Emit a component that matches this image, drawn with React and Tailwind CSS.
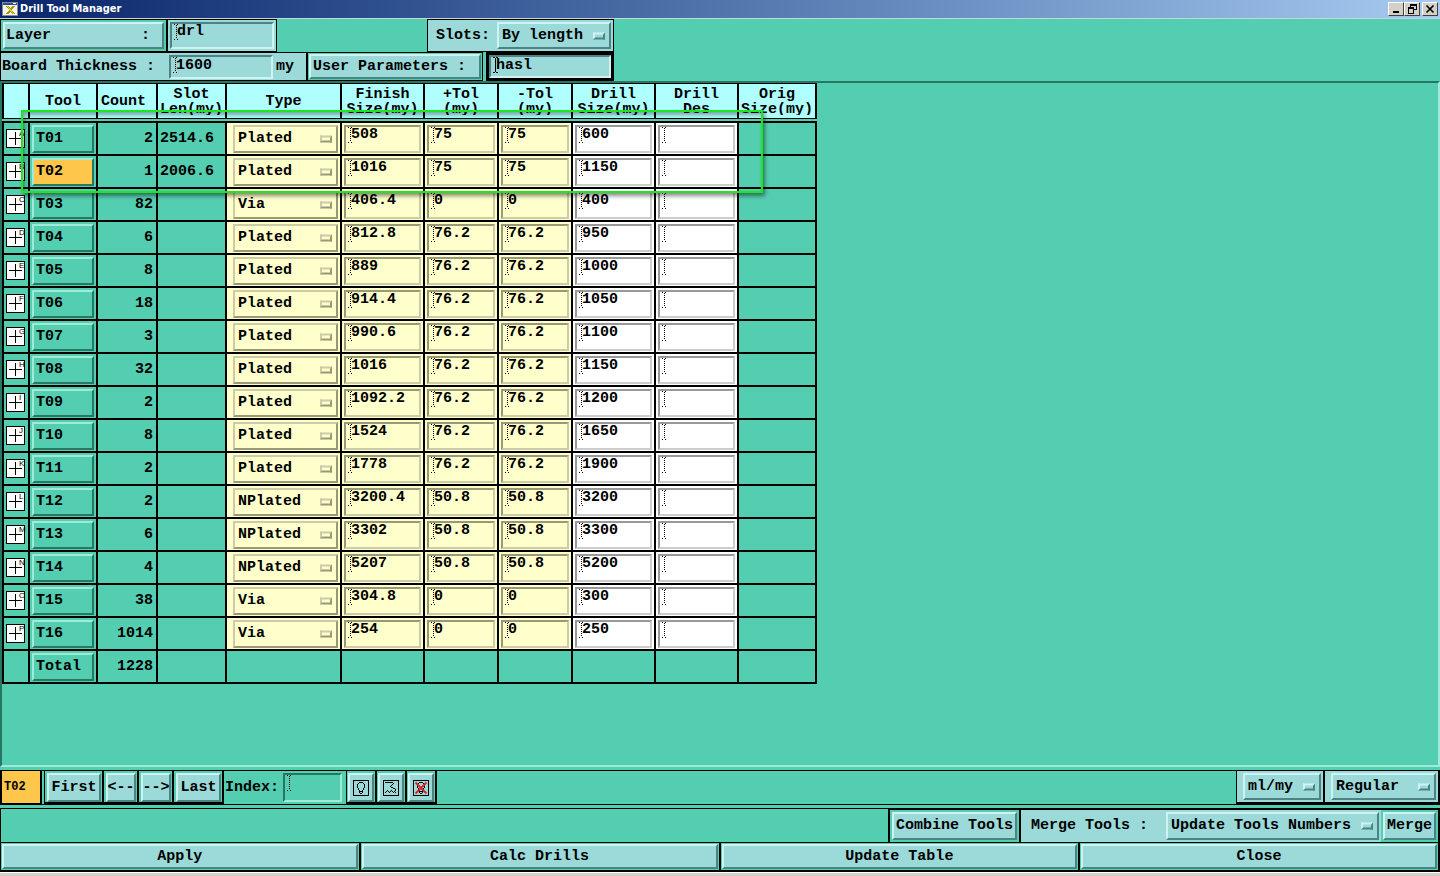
import { useState } from 'react';
import clsx from 'clsx';

const TOOLS = [
    { id: 'T01', mark: 'A', count: 2, slot: '2514.6', type: 'Plated', finish: '508', plus: '75', minus: '75', drill: '600' },
    { id: 'T02', mark: 'B', count: 1, slot: '2006.6', type: 'Plated', finish: '1016', plus: '75', minus: '75', drill: '1150' },
    { id: 'T03', mark: 'C', count: 82, slot: '', type: 'Via', finish: '406.4', plus: '0', minus: '0', drill: '400' },
    { id: 'T04', mark: 'D', count: 6, slot: '', type: 'Plated', finish: '812.8', plus: '76.2', minus: '76.2', drill: '950' },
    { id: 'T05', mark: 'E', count: 8, slot: '', type: 'Plated', finish: '889', plus: '76.2', minus: '76.2', drill: '1000' },
    { id: 'T06', mark: 'F', count: 18, slot: '', type: 'Plated', finish: '914.4', plus: '76.2', minus: '76.2', drill: '1050' },
    { id: 'T07', mark: 'G', count: 3, slot: '', type: 'Plated', finish: '990.6', plus: '76.2', minus: '76.2', drill: '1100' },
    { id: 'T08', mark: 'H', count: 32, slot: '', type: 'Plated', finish: '1016', plus: '76.2', minus: '76.2', drill: '1150' },
    { id: 'T09', mark: 'I', count: 2, slot: '', type: 'Plated', finish: '1092.2', plus: '76.2', minus: '76.2', drill: '1200' },
    { id: 'T10', mark: 'J', count: 8, slot: '', type: 'Plated', finish: '1524', plus: '76.2', minus: '76.2', drill: '1650' },
    { id: 'T11', mark: 'K', count: 2, slot: '', type: 'Plated', finish: '1778', plus: '76.2', minus: '76.2', drill: '1900' },
    { id: 'T12', mark: 'L', count: 2, slot: '', type: 'NPlated', finish: '3200.4', plus: '50.8', minus: '50.8', drill: '3200' },
    { id: 'T13', mark: 'M', count: 6, slot: '', type: 'NPlated', finish: '3302', plus: '50.8', minus: '50.8', drill: '3300' },
    { id: 'T14', mark: 'N', count: 4, slot: '', type: 'NPlated', finish: '5207', plus: '50.8', minus: '50.8', drill: '5200' },
    { id: 'T15', mark: 'O', count: 38, slot: '', type: 'Via', finish: '304.8', plus: '0', minus: '0', drill: '300' },
    { id: 'T16', mark: 'P', count: 1014, slot: '', type: 'Via', finish: '254', plus: '0', minus: '0', drill: '250' },
];

const HEADERS = [
    [''],
    ['Tool'],
    ['Count'],
    ['Slot', 'Len(my)'],
    ['Type'],
    ['Finish', 'Size(my)'],
    ['+Tol', '(my)'],
    ['-Tol', '(my)'],
    ['Drill', 'Size(my)'],
    ['Drill', 'Des'],
    ['Orig', 'Size(my)'],
];

const RAISED = {
    aqua: 'bg-[#9cdada] border-t-[#cdf3f3] border-l-[#cdf3f3] border-b-[#4d8383] border-r-[#4d8383]',
    teal: 'bg-[#54ceb0] border-t-[#a0ead8] border-l-[#a0ead8] border-b-[#277863] border-r-[#277863]',
    orange: 'bg-[#ffc64c] border-t-[#a0ead8] border-l-[#a0ead8] border-b-[#277863] border-r-[#277863]',
    cream: 'bg-[#ffffcc] border-t-[#ccccaa] border-l-[#ccccaa] border-b-[#999978] border-r-[#999978]',
};

const SUNKEN = {
    aqua: 'bg-[#9cdada] border-t-[#4d8383] border-l-[#4d8383] border-b-[#cdf3f3] border-r-[#cdf3f3]',
    teal: 'bg-[#54ceb0] border-t-[#277863] border-l-[#277863] border-b-[#a0ead8] border-r-[#a0ead8]',
    cream: 'bg-[#ffffcc] border-t-[#999978] border-l-[#999978] border-b-[#ccccaa] border-r-[#ccccaa]',
    white: 'bg-white border-t-[#999999] border-l-[#999999] border-b-[#cccccc] border-r-[#cccccc]',
};

function Caret({ solid }) {
    return (
        <svg
            className="pointer-events-none absolute left-1 top-[2px]"
            width="5"
            height="16"
            shapeRendering="crispEdges"
            stroke="#000"
            fill="none"
            aria-hidden="true"
        >
            <path
                d="M0 .5h2M3 .5h2M2.5 1v14M0 15.5h2M3 15.5h2"
                strokeDasharray={solid ? undefined : '1 1'}
            />
        </svg>
    );
}

function Field({ label, value = '', tone, solid, short, className }) {
    return (
        <div className={clsx('relative', className)}>
            <input
                aria-label={label}
                defaultValue={value}
                className={clsx(
                    'block h-full w-full border-2 pl-[5px] outline-none',
                    short ? 'pb-[3px]' : 'pb-2',
                    SUNKEN[tone]
                )}
            />
            <Caret solid={solid} />
        </div>
    );
}

function Menu({ label, id, value, options, tone = 'aqua', className }) {
    return (
        <div className={clsx('relative', className)}>
            <select
                id={id}
                aria-label={label}
                defaultValue={value}
                className={clsx('block h-full w-full appearance-none border-2 pl-[3px] outline-none', RAISED[tone])}
            >
                {options.map((option) => (
                    <option key={option}>{option}</option>
                ))}
            </select>
            <span
                className={clsx(
                    'pointer-events-none absolute right-[6px] top-1/2 h-[7px] w-3 -translate-y-1/2 border-2',
                    RAISED[tone]
                )}
            ></span>
        </div>
    );
}

function Button({ tone = 'aqua', className, children, ...props }) {
    return (
        <button
            type="button"
            className={clsx('flex items-center border-2 whitespace-pre', RAISED[tone], className)}
            {...props}
        >
            {children}
        </button>
    );
}

function ToolMark({ letter }) {
    return (
        <svg width="20" height="22" shapeRendering="crispEdges" className="mx-auto block" aria-hidden="true">
            <rect x=".5" y="1.5" width="18" height="18" fill="#fff" stroke="#000" />
            <path d="M3 10.5h13M9.5 4v13" stroke="#000" />
            <text x="13" y="8" fontSize="8" fontWeight="normal" fontFamily="Liberation Sans">
                {letter}
            </text>
        </svg>
    );
}

function TitleBar() {
    const box =
        'flex h-[14px] w-4 items-center justify-center border bg-[#d4d0c8] border-t-white border-l-white border-b-[#404040] border-r-[#404040]';
    return (
        <header className="flex h-[19px] items-center border-b border-[#c5d8d8] bg-linear-to-r from-[#0a246a] to-[#a6caf0] pl-[2px] pr-[2px]">
            <svg width="16" height="14" className="mr-[2px]" shapeRendering="crispEdges" aria-hidden="true">
                <rect x=".5" y=".5" width="15" height="13" fill="#f4f4ec" stroke="#8c8c8c" />
                <path d="M1 1.5h14" stroke="#2c4ca0" strokeWidth="2" />
                <path d="M11 1.5h3" stroke="#fff" />
                <path d="M5 4l7 8M12 4l-7 8" stroke="#a89a10" strokeWidth="2" />
                <path d="M5 4l7 8" stroke="#e0d030" />
            </svg>
            <h1 className="flex-1 font-['DejaVu_Sans_Condensed','DejaVu_Sans',sans-serif] text-[11px] font-bold text-white">
                Drill Tool Manager
            </h1>
            <button type="button" aria-label="Minimize" className={box}>
                <svg width="12" height="10" shapeRendering="crispEdges">
                    <path d="M3 8h6" stroke="#000" strokeWidth="2" />
                </svg>
            </button>
            <button type="button" aria-label="Restore" className={box}>
                <svg width="12" height="10" shapeRendering="crispEdges" fill="none" stroke="#000">
                    <path d="M4.500 3V.5h6v5H8M4 1.500h7" />
                    <path d="M2.500 4v5.500h5V4M2 4.500h6M2 3.500h6" />
                </svg>
            </button>
            <button type="button" aria-label="Close" className={clsx(box, 'ml-[2px]')}>
                <svg width="12" height="10" fill="none" stroke="#000" strokeWidth="1.700">
                    <path d="M2.500 1.500l7 7M9.500 1.500l-7 7" />
                </svg>
            </button>
        </header>
    );
}

function Settings() {
    return (
        <section className="w-[614px]">
            <div className="flex h-[33px]">
                <div className="flex w-[168px] border border-r-2 border-black p-[2px]">
                    <Button className="flex-1 justify-between pl-px pr-3">
                        <span>Layer</span>
                        <span>:</span>
                    </Button>
                </div>
                <div className="w-[109px] border border-l-0 border-black bg-[#9cdada] p-[2px]">
                    <Field label="Layer" value="drl" tone="aqua" className="h-full" />
                </div>
                <div className="ml-auto flex items-center border border-black bg-[#9cdada] py-[2px] pl-2 pr-[2px]">
                    <label htmlFor="slots" className="mr-[7px]">
                        Slots:
                    </label>
                    <Menu
                        id="slots"
                        value="By length"
                        options={['By length', 'By count']}
                        className="h-full w-[114px]"
                    />
                </div>
            </div>
            <div className="flex h-[29px]">
                <div className="flex w-[308px] items-center border border-r-2 border-black bg-[#9cdada] pl-px">
                    <span className="w-[167px]">Board Thickness :</span>
                    <Field label="Board Thickness" value="1600" tone="aqua" short className="mr-[3px] h-6 w-[104px]" />
                    <span>my</span>
                </div>
                <div className="flex w-[175px] border border-l-0 border-black p-px">
                    <Button className="flex-1 pl-[2px]">User Parameters :</Button>
                </div>
                <div className="ml-auto w-[128px] border-3 border-black">
                    <Field label="User Parameters" value="hasl" tone="aqua" solid short className="h-full" />
                </div>
            </div>
        </section>
    );
}

function ToolTable({ selected, onSelect }) {
    const line = 'border-b-2 border-r-2 border-black p-0';
    const total = TOOLS.reduce((sum, tool) => sum + tool.count, 0);
    return (
        <table className="w-[815px] table-fixed border-separate border-spacing-0">
            <colgroup>
                <col className="w-[28px]" />
                <col className="w-[68px]" />
                <col className="w-[60px]" />
                <col className="w-[69px]" />
                <col className="w-[115px]" />
                <col className="w-[83px]" />
                <col className="w-[74px]" />
                <col className="w-[74px]" />
                <col className="w-[83px]" />
                <col className="w-[83px]" />
                <col className="w-[78px]" />
            </colgroup>
            <thead>
                <tr className="h-9">
                    {HEADERS.map((lines, i) => (
                        <th
                            key={i}
                            className="border-y border-r-2 border-black bg-[#b0ffff] p-0 leading-[15px] first:border-l-2"
                        >
                            <div
                                className={clsx(
                                    'max-h-[28px] overflow-hidden whitespace-nowrap',
                                    lines[0] === 'Count' && 'pl-[3px] text-left'
                                )}
                            >
                                {lines.map((text) => (
                                    <div key={text}>{text}</div>
                                ))}
                            </div>
                        </th>
                    ))}
                </tr>
            </thead>
            <tbody>
                <tr>
                    <td colSpan={11} className="h-1 border-b-2 border-black p-0"></td>
                </tr>
                {TOOLS.map((tool) => (
                    <tr key={tool.id} className="h-[33px]">
                        <td className={clsx(line, 'border-l-2')}>
                            <ToolMark letter={tool.mark} />
                        </td>
                        <td className={line}>
                            <Button
                                tone={tool.id === selected ? 'orange' : 'teal'}
                                className="mx-[2px] h-7 w-[62px] pl-[2px]"
                                onClick={() => onSelect(tool.id)}
                            >
                                {tool.id}
                            </Button>
                        </td>
                        <td className={clsx(line, 'text-right')}>
                            <span className="pr-[3px]">{tool.count}</span>
                        </td>
                        <td className={line}>
                            <span className="pl-[2px]">{tool.slot}</span>
                        </td>
                        <td className={clsx(line, 'bg-[#ffffcc]')}>
                            <Menu
                                label={`${tool.id} type`}
                                value={tool.type}
                                options={['Plated', 'NPlated', 'Via']}
                                tone="cream"
                                className="ml-[6px] mr-[2px] h-7"
                            />
                        </td>
                        <td className={clsx(line, 'bg-[#ffffcc]')}>
                            <Field label={`${tool.id} finish size`} value={tool.finish} tone="cream" className="mx-[2px] h-7" />
                        </td>
                        <td className={clsx(line, 'bg-[#ffffcc]')}>
                            <Field label={`${tool.id} plus tolerance`} value={tool.plus} tone="cream" className="mx-[2px] h-7" />
                        </td>
                        <td className={clsx(line, 'bg-[#ffffcc]')}>
                            <Field label={`${tool.id} minus tolerance`} value={tool.minus} tone="cream" className="mx-[2px] h-7" />
                        </td>
                        <td className={clsx(line, 'bg-white')}>
                            <Field label={`${tool.id} drill size`} value={tool.drill} tone="white" className="mx-[2px] h-7" />
                        </td>
                        <td className={clsx(line, 'bg-white')}>
                            <Field label={`${tool.id} drill designation`} tone="white" className="mx-[2px] h-7" />
                        </td>
                        <td className={line}></td>
                    </tr>
                ))}
                <tr className="h-[33px]">
                    <td className={clsx(line, 'border-l-2')}></td>
                    <td className={line}>
                        <Button tone="teal" className="mx-[2px] h-7 w-[62px] pl-[2px]">
                            Total
                        </Button>
                    </td>
                    <td className={clsx(line, 'text-right')}>
                        <span className="pr-[3px]">{total}</span>
                    </td>
                    {HEADERS.slice(3).map((_, i) => (
                        <td key={i} className={line}></td>
                    ))}
                </tr>
            </tbody>
        </table>
    );
}

function Framed({ className, children }) {
    return <div className={clsx('flex border-b-2 border-r-2 border-black', className)}>{children}</div>;
}

function BulbIcon({ off }) {
    return (
        <svg width="16" height="16" fill="none" stroke="#000" shapeRendering="crispEdges">
            <rect x=".5" y=".5" width="15" height="15" />
            <path d="M6 2.5h4M5.5 3v1M10.5 3v1M4.5 4v4M11.5 4v4M5.5 8v2M10.5 8v2M6.5 10v3M9.5 10v3M6 11.5h4M7 13.5h2" />
            {off && (
                <path
                    d="M2.500 2.500l11 11M13.500 2.500l-11 11"
                    stroke="#d8202a"
                    strokeWidth="1.800"
                    shapeRendering="auto"
                />
            )}
        </svg>
    );
}

function ZoomIcon() {
    return (
        <svg width="16" height="16" fill="none" stroke="#000" shapeRendering="crispEdges">
            <rect x=".5" y=".5" width="15" height="15" />
            <path d="M2 2.5h8M10.5 3v1M9.5 4v1M8.5 5v1M7.5 6v1M8 7.500h2M10 8.500h2M12.500 9v2M11.500 11v1M12.500 12v1" />
            <path d="M2.500 12v1M3.500 11v1M4.500 10v1M5.500 11v1M6.500 12v1M7.500 11v1M8.500 10v1M9.500 11v1M10.500 12v1" />
        </svg>
    );
}

function Navigation({ selected, onSelect }) {
    const index = TOOLS.findIndex((tool) => tool.id === selected);
    const go = (i) => onSelect(TOOLS[Math.max(0, Math.min(TOOLS.length - 1, i))].id);
    return (
        <nav className="mt-[3px] flex h-[35px] border-y border-black">
            <div className="mr-[2px] flex w-[42px] items-center border-x-2 border-b border-black bg-[#ffc64c] pl-[2px] text-xs">
                {selected}
            </div>
            <div className="flex border-l border-black">
                <Framed className="pl-[2px] pr-px pt-[2px]">
                    <Button className="w-[54px] justify-center" onClick={() => go(0)}>First</Button>
                </Framed>
                <Framed className="pl-[2px] pr-px pt-[2px]">
                    <Button className="w-[30px] justify-center" onClick={() => go(index - 1)}>&lt;--</Button>
                </Framed>
                <Framed className="pl-[2px] pr-px pt-[2px]">
                    <Button className="w-[30px] justify-center" onClick={() => go(index + 1)}>--&gt;</Button>
                </Framed>
                <Framed className="pl-[2px] pr-px pt-[2px]">
                    <Button className="w-[45px] justify-center" onClick={() => go(TOOLS.length - 1)}>Last</Button>
                </Framed>
            </div>
            <span className="ml-px mr-1 self-center">Index:</span>
            <Field label="Index" tone="teal" className="my-[2px] mr-1 w-[59px]" />
            <div className="flex border-l border-black">
                <Framed className="px-px pt-[2px]">
                    <Button className="w-[26px] justify-center" aria-label="Highlight">
                        <BulbIcon />
                    </Button>
                </Framed>
                <Framed className="px-px pt-[2px]">
                    <Button className="w-[26px] justify-center" aria-label="Zoom">
                        <ZoomIcon />
                    </Button>
                </Framed>
                <Framed className="px-px pt-[2px]">
                    <Button className="w-[26px] justify-center" aria-label="Clear highlight">
                        <BulbIcon off />
                    </Button>
                </Framed>
            </div>
            <div className="ml-auto flex border-l border-black">
                <Framed className="bg-[#9cdada] py-[2px] pl-[6px] pr-[2px]">
                    <Menu label="Units" value="ml/my" options={['ml/my', 'inch/mm']} className="w-[78px]" />
                </Framed>
                <Framed className="bg-[#9cdada] py-[2px] pl-[6px] pr-[2px]">
                    <Menu label="Mode" value="Regular" options={['Regular', 'Compact']} className="w-[105px]" />
                </Framed>
            </div>
        </nav>
    );
}

function Actions() {
    return (
        <footer>
            <div className="mt-[3px] flex h-[34px] justify-end border-l border-t border-black">
                <div className="flex border-x-2 border-t border-black p-[2px]">
                    <Button className="px-[2px]">Combine Tools</Button>
                </div>
                <div className="flex items-center border-t border-black bg-[#9cdada] py-[2px] pl-[10px] pr-[2px]">
                    <label htmlFor="merge-mode" className="mr-[18px] whitespace-pre">
                        Merge Tools :
                    </label>
                    <Menu
                        id="merge-mode"
                        value="Update Tools Numbers"
                        options={['Update Tools Numbers', 'Keep Tools Numbers']}
                        className="h-full w-[213px]"
                    />
                </div>
                <div className="flex border-r-2 border-t border-black p-[2px]">
                    <Button className="px-[2px]">Merge</Button>
                </div>
            </div>
            <div className="flex h-[30px] border-y-2 border-l border-t border-black">
                {['Apply', 'Calc Drills', 'Update Table', 'Close'].map((name) => (
                    <div key={name} className="flex flex-1 border-r-2 border-black p-px">
                        <Button className="flex-1 justify-center">{name}</Button>
                    </div>
                ))}
            </div>
            <div className="h-1 border-t border-white bg-[#d4d0c8]"></div>
        </footer>
    );
}

export default function App() {
    const [selected, setSelected] = useState('T02');
    return (
        <div className="flex min-h-screen flex-col bg-[#54ceb0] font-['Liberation_Mono',monospace] text-[15px] leading-[18px] font-bold text-black">
            <TitleBar />
            <Settings />
            <main className="relative flex-1 border-2 border-t-[#277863] border-l-[#277863] border-b-[#a0ead8] border-r-[#a0ead8]">
                <ToolTable selected={selected} onSelect={setSelected} />
                {/* slot tools callout */}
                <div className="pointer-events-none absolute left-[19px] top-[27px] h-[83px] w-[742px] border-2 border-[#1ee61e] shadow-[2px_3px_4px_rgba(0,0,0,0.45),inset_2px_3px_4px_rgba(0,0,0,0.35)]"></div>
            </main>
            <Navigation selected={selected} onSelect={setSelected} />
            <Actions />
        </div>
    );
}
